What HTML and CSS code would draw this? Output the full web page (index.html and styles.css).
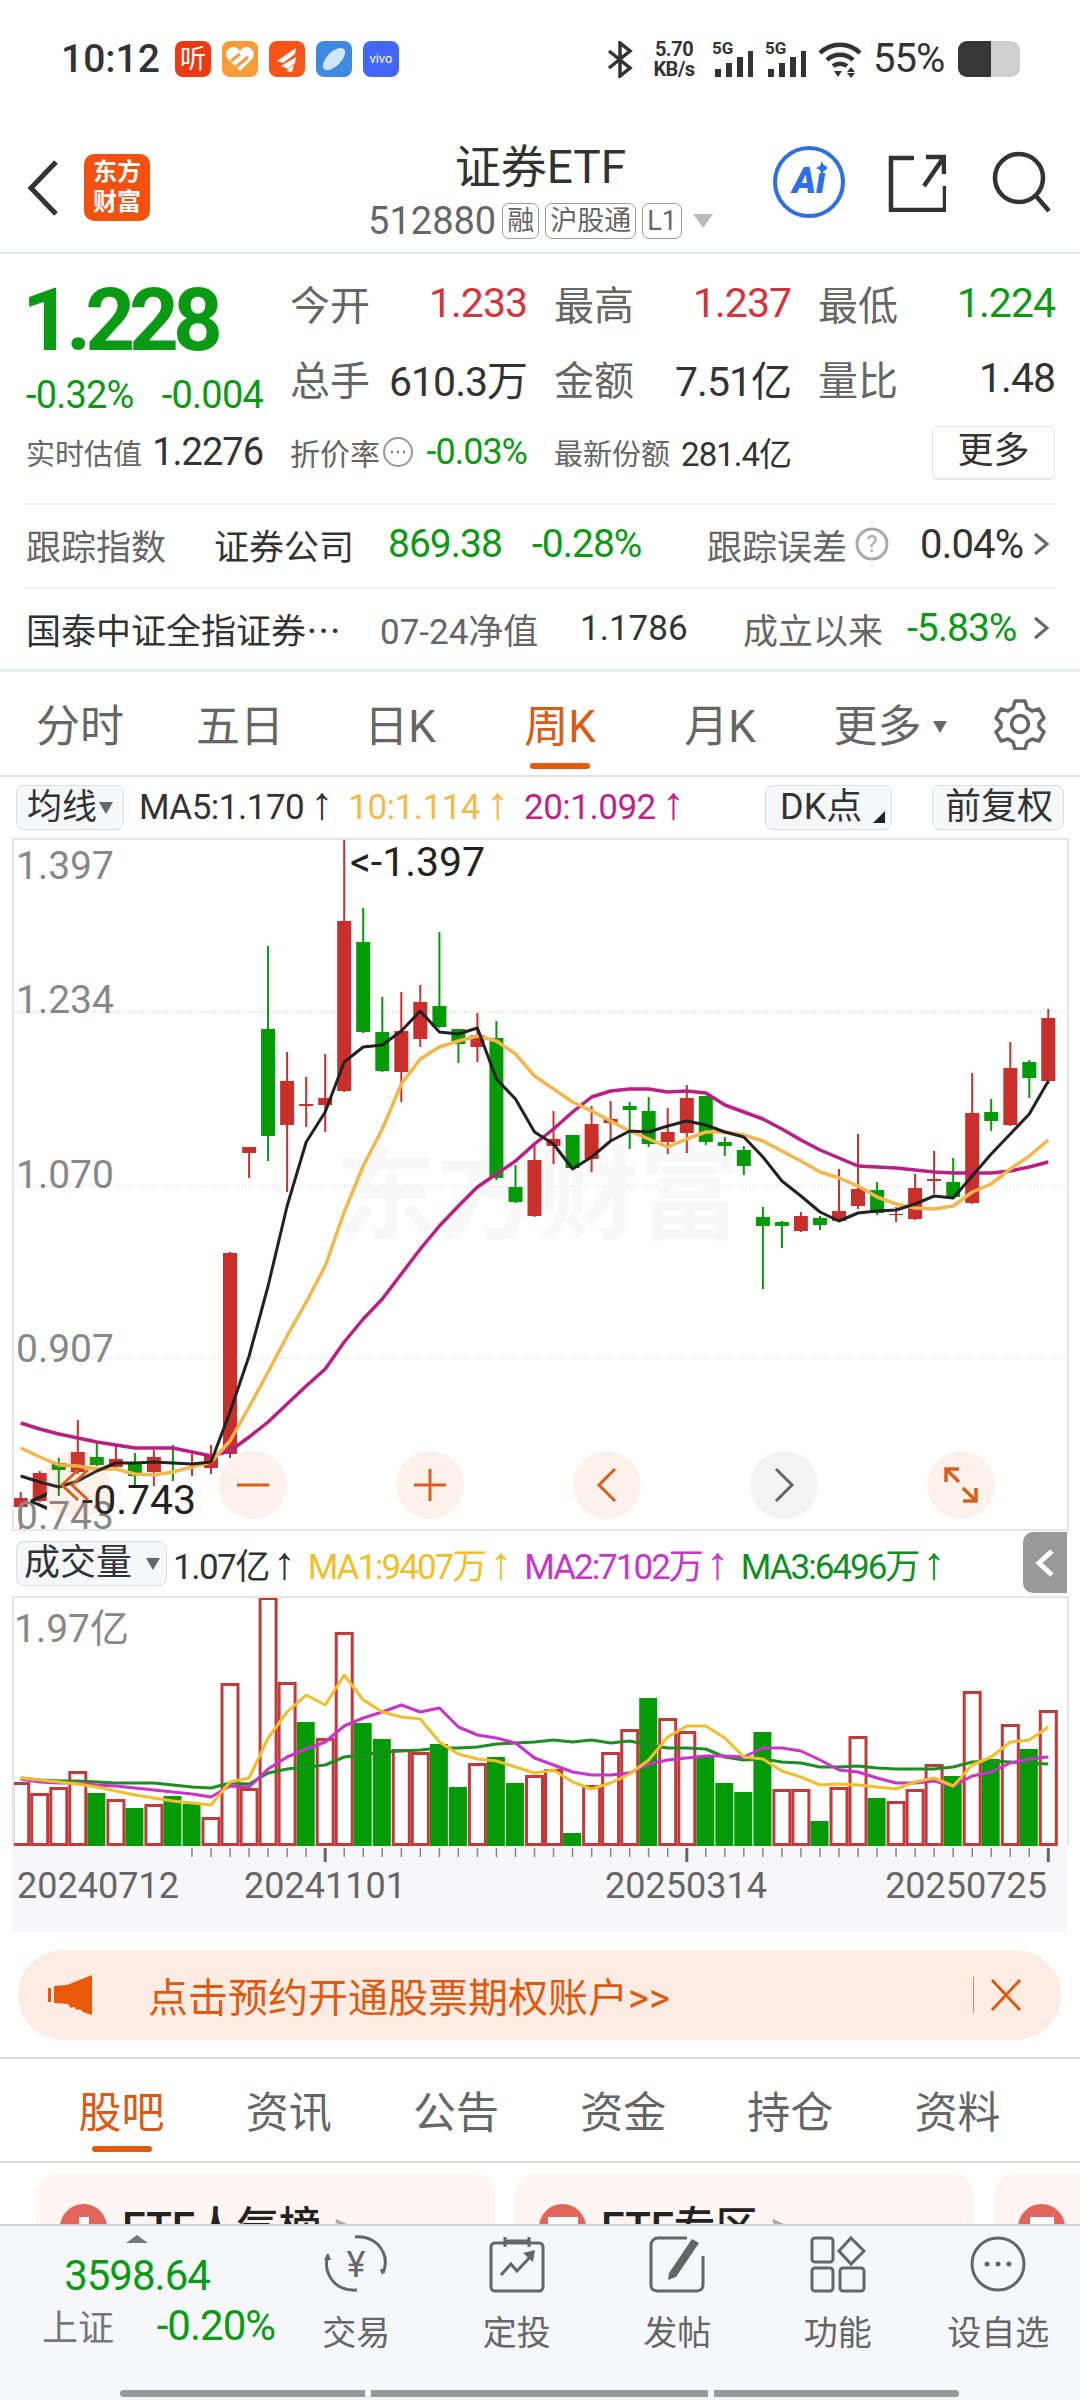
FILE: index.html
```html
<!DOCTYPE html>
<html lang="zh">
    <head>
        <meta charset="utf-8">
        <title>证券ETF</title>
        <link rel="stylesheet" href="styles.css">
    </head>
    <body>
        <div class="page">
            <div class="statusbar">
                <span class="time">10:12</span>
                <div class="apps">
                    <span class="app app-ting">听</span>
                    <span class="app app-heart"><svg width="36" height="36" viewBox="0 0 36 36"><path d="M18 30L6 18c-3-4-2-9 2-11 4-2 7-1 10 3 3-4 6-5 10-3 4 2 5 7 2 11z" fill="#fff"/><path d="M9 20l9-7M14 26l12-10" stroke="#f79a38" stroke-width="3"/></svg></span>
                    <span class="app app-wing"><svg width="36" height="36" viewBox="0 0 36 36"><path d="M8 20L27 7l-1 6-12 9zM12 25l15-9-1 6-7 6zM17 30l8-6-2 7z" fill="#fff"/></svg></span>
                    <span class="app app-planet"><svg width="36" height="36" viewBox="0 0 36 36"><ellipse cx="18" cy="18" rx="14" ry="7" transform="rotate(-45 18 18)" fill="#cfe6fb"/></svg></span>
                    <span class="app app-vivo">vivo</span>
                </div>
                <div class="sys">
                    <svg class="bt" width="30" height="37" viewBox="0 0 30 37"><path d="M4 10l21 17-10 8V2l10 8L4 27" fill="none" stroke="#333" stroke-width="3.5"/></svg>
                    <div class="speed"><b>5.70</b><b>KB/s</b></div>
                    <div class="sig"><span>5G</span><svg width="43" height="26" viewBox="0 0 43 26"><path d="M3 18h6v8H3zM14 12h6v14h-6zM25 6h6v20h-6zM36 0h5v26h-5z" fill="#333"/></svg></div>
                    <div class="sig"><span>5G</span><svg width="43" height="26" viewBox="0 0 43 26"><path d="M3 18h6v8H3zM14 12h6v14h-6zM25 6h6v20h-6zM36 0h5v26h-5z" fill="#333"/></svg></div>
                    <svg class="wifi" width="44" height="37" viewBox="0 0 44 37"><path d="M2 12c11-11 29-11 40 0M9 19c7-7 19-7 26 0M15 25c4-3 10-3 14 0" fill="none" stroke="#333" stroke-width="4.5"/><path d="M16 30h8l-4 6zM29 31l4-5 4 5zM29 32h8l-4 5z" fill="#333"/></svg>
                    <span class="batt-text">55%</span>
                    <div class="batt"><i></i></div>
                </div>
            </div>

            <div class="navbar">
                <svg class="back" width="32" height="56" viewBox="0 0 32 56"><path d="M29 2L4 28l25 26" fill="none" stroke="#333" stroke-width="5"/></svg>
                <div class="logo">东方<br>财富</div>
                <div class="nav-title">
                    <div class="nav-name">证券ETF</div>
                    <div class="nav-code">
                        <span>512880</span>
                        <em class="tag">融</em>
                        <em class="tag">沪股通</em>
                        <em class="tag">L1</em>
                        <i class="nav-arrow"></i>
                    </div>
                </div>
                <div class="ai">
                    <span>Ai</span>
                    <svg class="ai-star" width="12" height="14" viewBox="0 0 12 14"><path d="M6 0l2 5 4 2-4 2-2 5-2-5-4-2 4-2z" fill="#2f6fe6"/></svg>
                </div>
                <svg class="nav-ico nav-share" width="58" height="58" viewBox="0 0 58 58"><path d="M26 4H3v52h54V32M56 3L36 32M38 3h18v17" fill="none" stroke="#333" stroke-width="4.5"/></svg>
                <svg class="nav-ico nav-search" width="60" height="62" viewBox="0 0 60 62"><circle cx="27" cy="27" r="24" fill="none" stroke="#333" stroke-width="4.5"/><path d="M44 45l13 15" stroke="#333" stroke-width="4.5"/></svg>
            </div>

            <section class="quote">
                <div class="quote-grid quote-main">
                    <div class="price-box">
                        <div class="price">1.228</div>
                        <div class="price-chg"><span>-0.32%</span><span>-0.004</span></div>
                    </div>
                    <div class="stat"><label>今开</label><b class="up">1.233</b></div>
                    <div class="stat"><label>最高</label><b class="up">1.237</b></div>
                    <div class="stat"><label>最低</label><b class="down">1.224</b></div>
                    <div class="stat"><label>总手</label><b>610.3万</b></div>
                    <div class="stat"><label>金额</label><b>7.51亿</b></div>
                    <div class="stat"><label>量比</label><b>1.48</b></div>
                </div>
                <div class="quote-grid quote-small">
                    <div class="stat-s"><label>实时估值</label><b>1.2276</b></div>
                    <div class="stat-s">
                        <label>折价率<svg class="dots" width="32" height="32" viewBox="0 0 32 32"><circle cx="16" cy="16" r="14" fill="none" stroke="#999" stroke-width="2"/><path d="M9 16h2M15 16h2M21 16h2" stroke="#777" stroke-width="2.5"/></svg></label>
                        <b class="down">-0.03%</b>
                    </div>
                    <div class="stat-s"><label>最新份额</label><b>281.4亿</b></div>
                    <div class="more-wrap"><span class="more-btn">更多</span></div>
                </div>
                <div class="info-row info-track">
                    <label>跟踪指数</label>
                    <span>证券公司</span>
                    <span class="down">869.38</span>
                    <span class="down pct">-0.28%</span>
                    <label>跟踪误差</label>
                    <svg width="34" height="34" viewBox="0 0 34 34"><circle cx="17" cy="17" r="15" fill="none" stroke="#aaa" stroke-width="3"/><text x="17" y="25" class="help-q">?</text></svg>
                    <span class="val pct">0.04%</span>
                    <svg class="chev" width="18" height="24" viewBox="0 0 18 24"><path d="M2 2l12 10L2 22" fill="none" stroke="#666" stroke-width="3"/></svg>
                </div>
                <div class="info-row info-fund">
                    <span class="fund-name">国泰中证全指证券<em>…</em></span>
                    <label>07-24净值</label>
                    <span>1.1786</span>
                    <label>成立以来</label>
                    <span class="down val pct">-5.83%</span>
                    <svg class="chev" width="18" height="24" viewBox="0 0 18 24"><path d="M2 2l12 10L2 22" fill="none" stroke="#666" stroke-width="3"/></svg>
                </div>
            </section>

            <nav class="period-tabs">
                <div class="ptab"><span>分时</span></div>
                <div class="ptab"><span>五日</span></div>
                <div class="ptab"><span>日K</span></div>
                <div class="ptab active"><span>周K</span><i></i></div>
                <div class="ptab"><span>月K</span></div>
                <div class="ptab ptab-more"><span>更多<em class="tri"></em></span></div>
                <div class="ptab gear">
                    <svg width="52" height="52" viewBox="0 0 52 52"><path d="M21 3h10l2 7 5 3 7-2 5 9-5 5v4l5 5-5 9-7-2-5 3-2 7H21l-2-7-5-3-7 2-5-9 5-5v-4l-5-5 5-9 7 2 5-3z" fill="none" stroke="#666" stroke-width="3.5" stroke-linejoin="round"/><circle cx="26" cy="26" r="8.5" fill="none" stroke="#666" stroke-width="3.5"/></svg>
                </div>
            </nav>

            <div class="ma-row">
                <span class="btn btn-ma">均线<em class="tri tri-dark"></em></span>
                <span>MA5:1.170<i class="ar">↑</i></span>
                <span class="c-ma10">10:1.114<i class="ar">↑</i></span>
                <span class="c-ma20">20:1.092<i class="ar">↑</i></span>
                <span class="btn btn-dk">DK点<em class="corner"></em></span>
                <span class="btn btn-fq">前复权</span>
            </div>

            <div class="kbox">
                <svg id="kChart" width="1053" height="689" viewBox="14 841 1053 689">
                    <path class="grid-line" d="M14 1013H1067M14 1187H1067M14 1359H1067"/>
                    <text class="watermark" x="336" y="1232">东方财富</text>
                    <g id="candles"></g>
                    <g id="kLines"></g>
                    <text class="ax" x="16" y="880">1.397</text>
                    <text class="ax" x="16" y="1014">1.234</text>
                    <text class="ax" x="16" y="1189">1.070</text>
                    <text class="ax" x="16" y="1363">0.907</text>
                    <text class="ax" x="16" y="1530">0.743</text>
                    <text class="mark" x="350" y="877">&lt;-1.397</text>
                    <text class="mark" x="29" y="1515">&lt;<tspan dx="32">-0.743</tspan></text>
                </svg>
                <div class="chart-ctrl">
                    <span class="ctrl"><svg width="36" height="36" viewBox="0 0 36 36"><path d="M20 3L4 18l16 15M30 3L14 18l16 15" fill="none" stroke="#d9601a" stroke-width="3"/></svg></span>
                    <span class="ctrl"><svg width="36" height="36" viewBox="0 0 36 36"><path d="M2 18h32" stroke="#d9601a" stroke-width="3"/></svg></span>
                    <span class="ctrl"><svg width="36" height="36" viewBox="0 0 36 36"><path d="M2 18h32M18 2v32" stroke="#d9601a" stroke-width="3"/></svg></span>
                    <span class="ctrl"><svg width="36" height="36" viewBox="0 0 36 36"><path d="M26 2L10 18l16 16" fill="none" stroke="#d9601a" stroke-width="3"/></svg></span>
                    <span class="ctrl ctrl-off"><svg width="36" height="36" viewBox="0 0 36 36"><path d="M10 2l16 16-16 16" fill="none" stroke="#666" stroke-width="3"/></svg></span>
                    <span class="ctrl"><svg width="36" height="36" viewBox="0 0 36 36"><path d="M3 15V2h13M3 2l13 13M33 21v13H20M33 34L20 21" fill="none" stroke="#d9601a" stroke-width="3.5"/></svg></span>
                </div>
            </div>

            <div class="vol-row">
                <span class="btn btn-vol">成交量<em class="tri tri-dark"></em></span>
                <span class="c-v0">1.07亿<i class="ar">↑</i></span>
                <span class="c-v1">MA1:9407万<i class="ar">↑</i></span>
                <span class="c-v2">MA2:7102万<i class="ar">↑</i></span>
                <span class="c-v3">MA3:6496万<i class="ar">↑</i></span>
                <span class="collapse"><svg width="20" height="30" viewBox="0 0 20 30"><path d="M17 3L4 15l13 12" fill="none" stroke="#fff" stroke-width="5"/></svg></span>
            </div>

            <div class="vbox">
                <svg id="vChart" width="1053" height="248" viewBox="14 1598 1053 248">
                    <g id="volBars"></g>
                    <g id="volLines"></g>
                    <text class="ax" x="14" y="1642">1.97亿</text>
                </svg>
            </div>
            <div class="axis">
                <svg id="axisChart" width="1055" height="86" viewBox="12 1846 1055 86">
                    <g id="ticks"></g>
                    <text class="date" x="17" y="1898">20240712</text>
                    <text class="date date-mid" x="325" y="1898">20241101</text>
                    <text class="date date-mid" x="686" y="1898">20250314</text>
                    <text class="date date-end" x="1047" y="1898">20250725</text>
                </svg>
            </div>

            <div class="notice">
                <svg width="46" height="40" viewBox="0 0 46 40"><path d="M0 13h3v14H0zM6 11l13-1L44 0v40l-9-3-3-3-3 1-3-3-3 1-3-4-14-1z" fill="#e8590c"/></svg>
                <span class="notice-text">点击预约开通股票期权账户&gt;&gt;</span>
                <i class="notice-sep"></i>
                <svg width="34" height="34" viewBox="0 0 34 34"><path d="M3 2l28 30M31 2L3 32" stroke="#e0590f" stroke-width="3"/></svg>
            </div>

            <nav class="info-tabs">
                <div class="itab active"><span>股吧</span><i></i></div>
                <div class="itab"><span>资讯</span></div>
                <div class="itab"><span>公告</span></div>
                <div class="itab"><span>资金</span></div>
                <div class="itab"><span>持仓</span></div>
                <div class="itab"><span>资料</span></div>
            </nav>

            <div class="cards">
                <div class="card"><i class="card-ico ico-a"></i><b>ETF人气榜</b><span class="card-arrow">&gt;</span></div>
                <div class="card"><i class="card-ico ico-b"></i><b>ETF专区</b><span class="card-arrow">&gt;</span></div>
                <div class="card card-last"><i class="card-ico ico-c"></i></div>
            </div>

            <footer class="bottom">
                <div class="bottom-main">
                    <div class="index">
                        <i class="index-tri"></i>
                        <div class="index-val">3598.64</div>
                        <div class="index-row"><label>上证</label><span>-0.20%</span></div>
                    </div>
                    <div class="bottom-tabs">
                        <div class="btab">
                            <svg width="66" height="58" viewBox="0 0 66 58"><path d="M5 20c-2 6-2 14 1 20 5 11 16 16 28 15M60 38c3-7 3-15 0-21C55 6 44 1 32 2" fill="none" stroke="#666" stroke-width="3"/><path d="M1 25l4-7 3 7zM57 34l6 0-4 6z" fill="#666"/><text class="yen" x="33" y="42">¥</text></svg>
                            <span>交易</span>
                        </div>
                        <div class="btab">
                            <svg width="56" height="58" viewBox="0 0 56 58"><rect x="2" y="8" width="52" height="48" rx="4" fill="none" stroke="#666" stroke-width="3"/><path d="M16 2v10M40 2v10M16 6h24" stroke="#666" stroke-width="3"/><path d="M12 40l10-11 6 7 14-15" fill="none" stroke="#666" stroke-width="3"/><path d="M34 18l12-3-2 12z" fill="#666"/></svg>
                            <span>定投</span>
                        </div>
                        <div class="btab">
                            <svg width="56" height="58" viewBox="0 0 56 58"><path d="M38 3H9C5 3 2 6 2 10v40c0 4 3 6 7 6h38c4 0 7-2 7-6V21" fill="none" stroke="#666" stroke-width="3"/><path d="M20 38L43 4l7 4-23 34-8 3z" fill="#666"/></svg>
                            <span>发帖</span>
                        </div>
                        <div class="btab">
                            <svg width="56" height="56" viewBox="0 0 56 56"><rect x="2" y="2" width="21" height="24" rx="3" fill="none" stroke="#666" stroke-width="3"/><path d="M41 2l13 13-13 13-12-13z" fill="none" stroke="#666" stroke-width="3"/><rect x="2" y="32" width="21" height="23" rx="3" fill="none" stroke="#666" stroke-width="3"/><rect x="30" y="32" width="24" height="23" rx="3" fill="none" stroke="#666" stroke-width="3"/></svg>
                            <span>功能</span>
                        </div>
                        <div class="btab">
                            <svg width="56" height="58" viewBox="0 0 56 58"><circle cx="28" cy="29" r="26" fill="none" stroke="#666" stroke-width="3"/><circle cx="17" cy="29" r="2.5" fill="#666"/><circle cx="28" cy="29" r="2.5" fill="#666"/><circle cx="39" cy="29" r="2.5" fill="#666"/></svg>
                            <span>设自选</span>
                        </div>
                    </div>
                </div>
                <div class="gesture"><i></i><i></i><i></i></div>
            </footer>
        </div>
        <script src="chart.js"></script>
    </body>
</html>
```
FILE: styles.css
```css
html, body {
    margin: 0;
    padding: 0;
    background: #fff;
}
body {
    font-family: Roboto, "Noto Sans CJK SC", sans-serif;
    color: #333;
}
em, i {
    font-style: normal;
}
.page {
    width: 1080px;
    height: 2400px;
    overflow: hidden;
    display: flex;
    flex-direction: column;
}
.up { color: #d6333a; }
.down { color: #0b9a14; }

/* status bar */
.statusbar {
    height: 118px;
    flex: none;
    box-sizing: border-box;
    padding: 41px 60px 0 61px;
    display: flex;
    align-items: flex-start;
}
.time {
    font-size: 39px;
    line-height: 36px;
    font-weight: 500;
}
.apps {
    display: flex;
    gap: 11px;
    margin-left: 15px;
}
.app {
    width: 36px;
    height: 36px;
    border-radius: 8px;
    color: #fff;
    display: flex;
    align-items: center;
    justify-content: center;
    font-size: 26px;
    line-height: 36px;
}
.app-ting { background: #ee3a12; }
.app-heart { background: #f79a38; }
.app-wing { background: #f9531a; }
.app-planet { background: #3f89e0; }
.app-vivo { background: #4266f6; font-size: 13px; }
.sys {
    margin-left: auto;
    display: flex;
    align-items: center;
    height: 36px;
}
.speed {
    margin-left: 17px;
    width: 44px;
    display: flex;
    flex-direction: column;
    align-items: center;
    font-size: 20px;
    line-height: 20px;
    white-space: nowrap;
    letter-spacing: -0.5px;
}
.sig {
    display: grid;
    width: 43px;
    height: 36px;
    margin-left: 10px;
}
.speed + .sig { margin-left: 16px; }
.sig span, .sig svg {
    grid-area: 1 / 1;
}
.sig span {
    font-size: 17px;
    font-weight: 700;
    line-height: 14px;
}
.sig svg {
    align-self: end;
}
.wifi {
    margin-left: 10px;
}
.batt-text {
    margin-left: 11px;
    font-size: 40px;
    line-height: 36px;
    width: 74px;
    letter-spacing: -1px;
}
.batt {
    width: 62px;
    height: 36px;
    margin-left: 11px;
    border-radius: 9px;
    background: #cfcfcf;
    overflow: hidden;
}
.batt i {
    display: block;
    width: 33px;
    height: 36px;
    background: #363636;
}

/* nav */
.navbar {
    height: 136px;
    flex: none;
    box-sizing: border-box;
    border-bottom: 2px solid #e2e8e8;
    display: flex;
    align-items: flex-start;
    padding: 24px 28px 0 0;
}
.back {
    margin: 18px 0 0 27px;
}
.logo {
    width: 66px;
    height: 67px;
    margin: 12px 0 0 25px;
    background: #f3510f;
    border-radius: 10px;
    color: #fff;
    font-size: 24px;
    font-weight: 700;
    line-height: 30px;
    text-align: center;
    padding-top: 3px;
    box-sizing: border-box;
}
.nav-title {
    flex: 1;
    padding-left: 158px;
    display: flex;
    flex-direction: column;
    align-items: center;
}
.nav-name {
    font-size: 46px;
    line-height: 50px;
}
.nav-code {
    display: flex;
    align-items: center;
    margin-top: 10px;
    color: #666;
    font-size: 38px;
    line-height: 38px;
}
.tag {
    font-size: 27px;
    line-height: 34px;
    border: 1px solid #999;
    border-radius: 7px;
    padding: 0 4px;
    margin-left: 6px;
}
.nav-arrow {
    width: 0;
    height: 0;
    margin-left: 11px;
    border: 10px solid transparent;
    border-top: 14px solid #bbb;
    border-bottom: 0;
}
.ai {
    position: relative;
    width: 72px;
    height: 72px;
    box-sizing: border-box;
    border: 4px solid #2f6fe6;
    border-radius: 50%;
    color: #2f6fe6;
    font-size: 36px;
    font-weight: 900;
    font-style: italic;
    text-align: center;
    line-height: 62px;
    margin-top: 4px;
}
.ai-star {
    position: absolute;
    left: 39px;
    top: 11px;
}
.nav-share { margin: 12px 0 0 43px; }
.nav-search { margin: 9px 0 0 46px; }

/* quote */
.quote {
    flex: none;
    height: 418px;
    box-sizing: border-box;
    padding-top: 11px;
    border-bottom: 3px solid #e8eeee;
}
.quote-grid {
    display: grid;
    grid-template-columns: repeat(4, 237px);
    column-gap: 27px;
    padding-left: 26px;
}
.quote-main {
    grid-template-rows: 75px 75px;
}
.price-box {
    grid-row: 1 / 3;
}
.price {
    height: 100px;
    margin: 5px 0 0 -4px;
    line-height: 100px;
    font-size: 87px;
    font-weight: 700;
    color: #0b9a14;
    letter-spacing: -6px;
}
.price-chg {
    height: 50px;
    line-height: 50px;
    font-size: 38px;
    color: #0b9a14;
    display: flex;
    justify-content: space-between;
    letter-spacing: -0.8px;
    white-space: nowrap;
}
.stat {
    display: flex;
    justify-content: space-between;
    align-items: center;
    font-size: 40px;
}
.stat label, .stat-s label, .info-row label {
    color: #666;
}
.stat b, .stat-s b {
    font-weight: 400;
    letter-spacing: -1px;
    font-size: 41px;
}
.quote-small {
    height: 70px;
    margin-top: 2px;
    margin-bottom: 16px;
}
.stat-s {
    display: flex;
    justify-content: space-between;
    align-items: center;
}
.stat-s label {
    font-size: 29px;
    display: flex;
    align-items: center;
}
.stat-s b {
    font-size: 38px;
}
.stat-s:nth-child(2) b { font-size: 36px; }
.stat-s:nth-child(2) label { font-size: 30px; }
.stat-s:nth-child(3) b { font-size: 33px; }
.dots {
    margin-left: 2px;
}
.more-wrap {
    display: flex;
    justify-content: flex-end;
    align-items: center;
}
.more-btn {
    width: 123px;
    height: 54px;
    box-sizing: border-box;
    margin-top: 2px;
    border: 1px solid #e4e4e4;
    border-bottom-width: 2px;
    border-radius: 6px;
    text-align: center;
    font-size: 36px;
    line-height: 48px;
}
.info-row {
    display: grid;
    align-items: center;
    box-sizing: border-box;
    height: 84px;
    margin: 0 25px 0 24px;
    padding: 0 0 4px 2px;
    border-top: 2px solid #f2f2f2;
    font-size: 35px;
    white-space: nowrap;
}
.info-row span.down, .info-row .val {
    font-size: 39px;
    letter-spacing: -1px;
}
.info-row .pct {
    font-size: 40px;
    letter-spacing: -0.8px;
}
.info-track {
    grid-template-columns: 188px 174px 144px 175px 148px 65px 116px auto;
}
.info-fund {
    grid-template-columns: 354px 200px 163px 164px 129px auto;
}
.fund-name em {
    font-family: "Noto Sans CJK SC", sans-serif;
}
.chev {
    margin-left: -3px;
}
.help-q {
    font-size: 24px;
    fill: #aaa;
    text-anchor: middle;
}

/* period tabs */
.period-tabs {
    flex: none;
    height: 105px;
    box-sizing: border-box;
    border-bottom: 2px solid #e2e2e2;
    display: grid;
    grid-template-columns: repeat(6, 160px) 120px;
    padding-top: 25px;
}
.ptab {
    display: flex;
    flex-direction: column;
    align-items: center;
    color: #666;
    font-size: 44px;
    line-height: 60px;
}
.ptab span {
    display: flex;
    align-items: center;
}
.ptab-more span {
    margin-left: 20px;
}
.ptab i {
    display: block;
    width: 60px;
    height: 6px;
    margin-top: 6px;
    border-radius: 3px;
    background: #e8590c;
}
.ptab.active {
    color: #dd5a12;
}
.gear {
    padding-top: 1px;
}
.tri {
    display: inline-block;
    width: 0;
    height: 0;
    margin-left: 11px;
    border: 7px solid transparent;
    border-top: 12px solid #666;
    border-bottom: 0;
}

/* chart headers */
.ma-row, .vol-row {
    flex: none;
    display: flex;
    align-items: center;
    gap: 15px;
    font-size: 35px;
    white-space: nowrap;
    padding-left: 16px;
}
.ma-row {
    height: 61px;
    letter-spacing: -0.5px;
}
.vol-row {
    height: 65px;
    position: relative;
    gap: 12px;
    letter-spacing: -0.5px;
}
.ar {
    font-family: "Liberation Sans", sans-serif;
    font-size: 46px;
    line-height: 0;
    margin-left: 6px;
    letter-spacing: 0;
}
.vol-row .ar {
    margin-left: 4px;
}
.btn {
    box-sizing: border-box;
    height: 45px;
    background: #f6f7f9;
    border: 1px solid #dcdcdc;
    border-radius: 8px;
    display: flex;
    align-items: center;
    font-size: 35px;
    line-height: 43px;
    position: relative;
    letter-spacing: 0;
}
.btn-ma {
    width: 108px;
    padding-left: 10px;
}
.btn-ma .tri { margin-left: 2px; }
.btn-dk {
    width: 127px;
    padding-left: 14px;
    margin-left: auto;
    font-size: 36px;
}
.btn-fq {
    width: 132px;
    padding-left: 12px;
    margin: 0 16px 0 25px;
    font-size: 36px;
}
.corner {
    position: absolute;
    right: 6px;
    bottom: 6px;
    width: 0;
    height: 0;
    border-left: 12px solid transparent;
    border-bottom: 12px solid #222;
}
.btn-vol {
    width: 151px;
    padding-left: 7px;
    margin-right: -6px;
    font-size: 36px;
}
.btn-vol .tri { margin-left: 14px; }
.c-ma10 { color: #f5b94a; }
.c-ma20 { color: #c21f8a; }
.c-v0 { letter-spacing: -1.5px; }
.c-v1, .c-v2, .c-v3 { letter-spacing: -2px; }
.c-v1 { color: #f2bf2b; }
.c-v2 { color: #cc33cc; }
.c-v3 { color: #0f8f1f; }
.collapse {
    position: absolute;
    left: 1023px;
    top: 1px;
    width: 44px;
    height: 61px;
    background: #999;
    border-radius: 10px 0 0 10px;
    display: flex;
    align-items: center;
    justify-content: center;
}

/* charts */
.kbox {
    flex: none;
    position: relative;
    width: 1053px;
    height: 689px;
    margin-left: 12px;
    border: 2px solid #e6e6e6;
}
.kbox svg, .vbox svg, .axis svg {
    display: block;
}
.grid-line {
    fill: none;
    stroke: #ccc;
    stroke-width: 1;
    stroke-dasharray: 1 2;
}
.watermark {
    font-size: 101px;
    font-weight: 700;
    fill: #f8f8f8;
}
.ax {
    font-size: 39px;
    fill: #888;
}
.mark {
    font-size: 41px;
    fill: #222;
}
.chart-ctrl {
    position: absolute;
    left: 28px;
    top: 611px;
    display: flex;
    gap: 109px;
}
.ctrl {
    width: 68px;
    height: 68px;
    border-radius: 50%;
    background: rgba(240, 120, 60, 0.1);
    display: flex;
    align-items: center;
    justify-content: center;
}
.ctrl-off {
    background: #f3f3f3;
}
.vbox {
    flex: none;
    width: 1053px;
    height: 248px;
    margin-left: 12px;
    border: solid #e6e6e6;
    border-width: 2px 2px 0;
}
.axis {
    flex: none;
    width: 1055px;
    height: 86px;
    margin-left: 12px;
    background: #f7f7fa;
}
.date {
    font-size: 36px;
    fill: #666;
}
.date-mid { text-anchor: middle; }
.date-end { text-anchor: end; }

/* notice */
.notice {
    flex: none;
    height: 90px;
    margin: 18px 19px 17px 18px;
    background: #fdece4;
    border-radius: 45px;
    display: flex;
    align-items: center;
    padding-left: 30px;
    color: #e0590f;
    font-size: 40px;
}
.notice-text {
    margin-left: 54px;
    width: 825px;
    white-space: nowrap;
}
.notice-sep {
    width: 1px;
    height: 36px;
    background: #d98a5a;
    margin-right: 15px;
}

/* info tabs */
.info-tabs {
    flex: none;
    height: 106px;
    box-sizing: border-box;
    display: grid;
    grid-template-columns: repeat(6, 167.2px);
    padding: 27px 0 0 38px;
    border: solid #dcdcdc;
    border-width: 2px 0;
}
.itab {
    display: flex;
    flex-direction: column;
    align-items: center;
    font-size: 43px;
    line-height: 54px;
    color: #666;
}
.itab.active { color: #dd5a12; }
.itab i {
    display: block;
    width: 60px;
    height: 6px;
    margin-top: 6px;
    border-radius: 3px;
    background: #e05a12;
}

/* cards clipped by the bottom bar */
.cards {
    flex: 1;
    min-height: 0;
    overflow: hidden;
    display: flex;
    gap: 20px;
    padding: 11px 0 0 36px;
}
.card {
    flex: none;
    width: 459px;
    height: 200px;
    box-sizing: border-box;
    padding: 30px 0 0 24px;
    background: #fff5f2;
    border-radius: 20px;
    display: flex;
    align-items: center;
    align-self: flex-start;
    font-size: 42px;
    color: #222;
}
.card b {
    align-self: flex-start;
    line-height: 48px;
    margin-left: 15px;
    font-weight: 500;
}
.card-ico {
    width: 47px;
    height: 47px;
    align-self: flex-start;
    border-radius: 50%;
    background: #e2645a;
    display: flex;
    justify-content: center;
    padding-top: 13px;
    box-sizing: border-box;
}
.card-ico::after {
    content: "";
    display: block;
    background: #fff;
    height: 8px;
}
.ico-a::after { width: 10px; }
.ico-b::after { width: 30px; }
.ico-c::after { width: 24px; height: 10px; }
.card-arrow {
    align-self: flex-start;
    line-height: 48px;
    margin-left: 12px;
    color: #aaa;
}

/* bottom bar */
.bottom {
    flex: none;
    height: 176px;
    box-sizing: border-box;
    background: #f5f7fa;
    border-top: 2px solid #d4d4d4;
    display: flex;
    flex-direction: column;
    justify-content: space-between;
    padding-bottom: 3px;
}
.bottom-main {
    display: flex;
    padding-top: 9px;
}
.index {
    width: 276px;
    display: flex;
    flex-direction: column;
    align-items: center;
}
.index-tri {
    width: 0;
    height: 0;
    border: 11px solid transparent;
    border-bottom: 8px solid #777;
    border-top: 0;
    margin-left: -2px;
}
.index-val {
    color: #0b9a14;
    font-size: 42px;
    line-height: 50px;
    margin-top: 8px;
    margin-left: -2px;
    letter-spacing: -1px;
}
.index-row {
    align-self: flex-start;
    box-sizing: border-box;
    width: 233px;
    height: 50px;
    margin: -1px 0 0 42px;
    display: flex;
    justify-content: space-between;
    align-items: center;
}
.index-row label {
    font-size: 36px;
    color: #777;
}
.index-row span {
    font-size: 42px;
    color: #0b9a14;
    letter-spacing: -1px;
}
.bottom-tabs {
    display: grid;
    grid-template-columns: repeat(5, 160.5px);
}
.btab {
    display: flex;
    flex-direction: column;
    align-items: center;
    font-size: 34px;
    color: #666;
}
.btab svg {
    height: 58px;
}
.btab span {
    margin-top: 16px;
    line-height: 48px;
}
.yen {
    font-size: 36px;
    fill: #666;
    text-anchor: middle;
}
.gesture {
    display: flex;
    gap: 6px;
    padding-left: 120px;
}
.gesture i {
    height: 7px;
    background: #999;
    width: 337px;
}
.gesture i:first-child {
    width: 245px;
    border-radius: 4px 0 0 4px;
}
.gesture i:last-child {
    width: 245px;
    border-radius: 0 4px 4px 0;
}
```
FILE: chart.js
```js
// weekly candles: body top, body bottom, wick top, wick bottom (page y), r = red / g = green
var candles = [
    ['r',1499,1508,1493,1532],['r',1474,1502,1472,1503],['g',1464,1471,1459,1497],['r',1453,1473,1421,1475],
    ['g',1458,1466,1442,1467],['r',1460,1468,1447,1469],['g',1463,1477,1454,1487],['r',1458,1473,1451,1487],
    ['g',1463,1465,1446,1482],['r',1464,1466,1455,1477],['r',1456,1469,1446,1475],['r',1254,1455,1253,1459],
    ['r',1148,1154,1148,1179],['g',1030,1137,947,1162],['r',1082,1126,1053,1193],['r',1105,1107,1078,1128],
    ['r',1099,1106,1055,1133],['r',922,1092,840,1093],['g',943,1033,909,1034],['g',1033,1072,998,1073],
    ['r',1032,1073,993,1103],['r',1003,1040,986,1048],['g',1007,1028,933,1029],['g',1030,1045,1030,1064],
    ['r',1036,1048,1014,1063],['g',1039,1179,1022,1181],['g',1188,1203,1166,1204],['r',1161,1217,1147,1218],
    ['r',1140,1147,1112,1165],['g',1136,1169,1136,1170],['r',1125,1160,1107,1173],['r',1120,1124,1102,1142],
    ['g',1107,1111,1103,1150],['g',1112,1145,1098,1148],['r',1133,1143,1109,1155],['r',1099,1134,1086,1154],
    ['g',1097,1143,1097,1146],['g',1143,1147,1138,1157],['g',1151,1167,1147,1176],['g',1218,1227,1208,1290],
    ['g',1223,1227,1222,1249],['r',1217,1232,1213,1233],['g',1219,1226,1217,1231],['r',1212,1222,1170,1222],
    ['r',1190,1207,1135,1210],['g',1191,1214,1183,1216],['r',1215,1216,1208,1223],['r',1189,1220,1175,1221],
    ['r',1180,1182,1152,1195],['g',1183,1198,1159,1198],['r',1114,1204,1074,1205],['g',1113,1122,1100,1132],
    ['r',1069,1126,1043,1127],['g',1063,1079,1061,1099],['r',1019,1082,1010,1085]
];
var ma5 = [1477,1483,1488,1482,1472,1464,1464,1463,1464,1465,1463,1413,1357,1287,1207,1143,1113,1063,1048,1046,1032,1012,1033,1035,1029,1080,1100,1133,1145,1170,1158,1142,1132,1133,1127,1122,1126,1133,1138,1158,1182,1197,1213,1222,1214,1212,1211,1205,1197,1199,1177,1155,1135,1115,1082];
var ma10 = [1449,1458,1466,1467,1470,1470,1475,1476,1473,1468,1463,1442,1408,1373,1337,1303,1267,1213,1167,1130,1085,1060,1048,1042,1037,1042,1055,1077,1090,1103,1112,1122,1132,1140,1148,1140,1133,1133,1136,1142,1152,1162,1173,1179,1187,1198,1205,1209,1210,1207,1193,1185,1170,1157,1141];
var ma20 = [1424,1430,1435,1439,1443,1446,1449,1449,1449,1453,1457,1452,1438,1423,1405,1387,1370,1343,1320,1300,1275,1250,1227,1207,1188,1175,1162,1145,1130,1113,1098,1092,1090,1090,1093,1092,1094,1106,1113,1120,1130,1141,1151,1159,1167,1168,1169,1171,1173,1174,1174,1174,1172,1168,1163];

// volume bars: top y and colour, all sit on y = 1846
var vols = [1782,1793,1787,1771,1793,1799,1808,1804,1796,1804,1817,1683,1788,1597,1682,1722,1738,1632,1723,1739,1749,1752,1744,1787,1763,1757,1783,1775,1769,1833,1785,1752,1729,1698,1718,1731,1757,1783,1792,1732,1789,1789,1821,1787,1736,1798,1801,1789,1764,1776,1691,1759,1724,1749,1710];
var volColors = 'rrrrgrgrggrrrrrgrrggrrggrggr' + 'rgrrrgrrggggrrgrrgrrrgrgrgr';
var v1 = [1778,1780,1782,1784,1787,1791,1795,1798,1801,1803,1805,1782,1778,1738,1712,1695,1705,1675,1700,1712,1717,1719,1742,1754,1759,1761,1767,1773,1770,1782,1789,1783,1774,1760,1737,1726,1726,1738,1757,1759,1771,1777,1785,1784,1785,1787,1789,1782,1778,1786,1765,1757,1742,1740,1727];
var v2 = [1779,1782,1783,1783,1785,1786,1788,1790,1792,1794,1797,1786,1787,1769,1757,1749,1742,1726,1718,1712,1705,1712,1708,1727,1735,1738,1743,1758,1765,1772,1775,1775,1773,1764,1760,1758,1756,1756,1757,1748,1748,1751,1760,1770,1772,1778,1783,1783,1781,1786,1776,1772,1763,1759,1757];
var v3 = [1778,1780,1781,1781,1782,1783,1783,1783,1785,1787,1788,1783,1784,1773,1769,1767,1765,1757,1755,1752,1751,1750,1748,1748,1747,1744,1743,1742,1740,1742,1740,1743,1741,1745,1748,1748,1749,1757,1760,1759,1762,1763,1767,1767,1766,1768,1769,1769,1769,1767,1762,1761,1762,1763,1764];

var RED = '#c9302c', GREEN = '#049a08', STEP = 19.03, X0 = 20.7;

function cx(i) {
    return X0 + STEP * i;
}

function polyline(ys, color, width) {
    var pts = ys.map(function (y, i) { return cx(i).toFixed(1) + ',' + y; }).join(' ');
    return '<polyline points="' + pts + '" fill="none" stroke="' + color + '" stroke-width="' + width + '" stroke-linejoin="round"/>';
}

var html = '';
candles.forEach(function (c, i) {
    var color = c[0] === 'r' ? RED : GREEN, x = cx(i);
    html += '<rect x="' + (x - 1).toFixed(1) + '" y="' + c[3] + '" width="2" height="' + (c[4] - c[3]) + '" fill="' + color + '"/>';
    html += '<rect x="' + (x - 7).toFixed(1) + '" y="' + c[1] + '" width="14" height="' + (c[2] - c[1]) + '" fill="' + color + '"/>';
});
document.getElementById('candles').innerHTML = html;
document.getElementById('kLines').innerHTML =
    polyline(ma20, '#bb1f86', 3.5) + polyline(ma10, '#f5b64c', 3.5) + polyline(ma5, '#222', 3);

html = '';
vols.forEach(function (top, i) {
    var x = cx(i) - 9.5;
    if (volColors[i] === 'r') {
        html += '<rect x="' + (x + 1.5).toFixed(1) + '" y="' + (top + 1.5) + '" width="16" height="' + (1846 - top - 3) + '" fill="#fff" stroke="#c23a3a" stroke-width="3"/>';
    } else {
        html += '<rect x="' + x.toFixed(1) + '" y="' + top + '" width="18" height="' + (1846 - top) + '" fill="' + GREEN + '"/>';
    }
});
document.getElementById('volBars').innerHTML = html;
document.getElementById('volLines').innerHTML =
    polyline(v3, '#1d8f22', 3) + polyline(v2, '#cc33cc', 3) + polyline(v1, '#f2bf2b', 3);

// the long ticks line up with the dates printed under them
html = '';
for (var i = 9; i < 55; i++) {
    var major = i === 16 || i === 35 || i === 54;
    html += '<rect x="' + (cx(i) - (major ? 1.5 : 0.75)).toFixed(1) + '" y="1848" width="' + (major ? 3 : 1.5) + '" height="' + (major ? 14 : 9) + '" fill="' + (major ? '#666' : '#888') + '"/>';
}
document.getElementById('ticks').innerHTML = html;
```
